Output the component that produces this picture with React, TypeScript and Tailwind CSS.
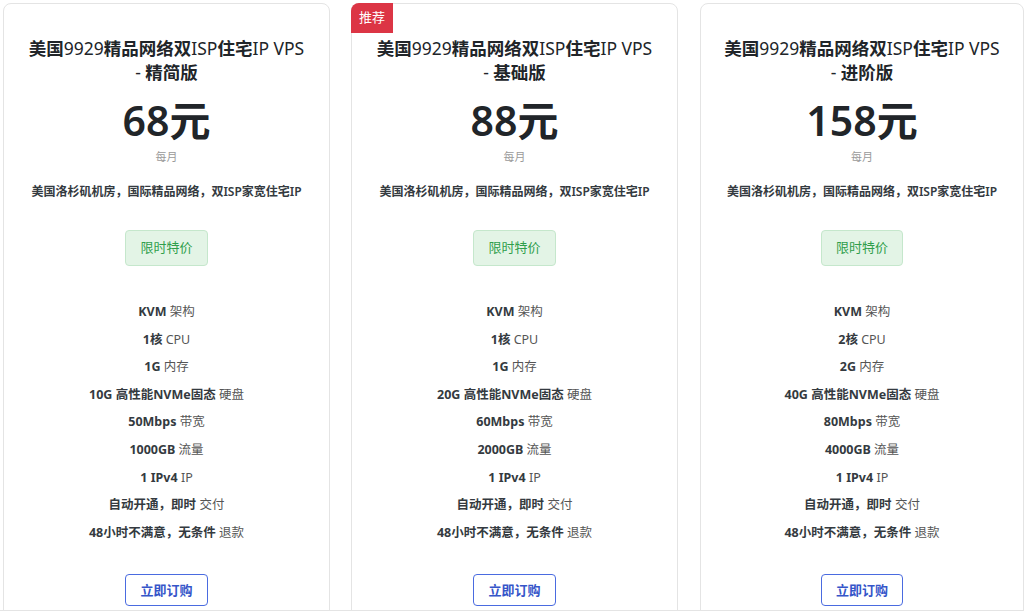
import React from "react";

type Plan = {
  edition: string;
  price: string;
  badge?: boolean;
  feats: [string, string][];
};

const plans: Plan[] = [
  {
    edition: "精简版",
    price: "68",
    feats: [
      ["KVM", "架构"],
      ["1核", "CPU"],
      ["1G", "内存"],
      ["10G 高性能NVMe固态", "硬盘"],
      ["50Mbps", "带宽"],
      ["1000GB", "流量"],
      ["1 IPv4", "IP"],
      ["自动开通，即时", "交付"],
      ["48小时不满意，无条件", "退款"],
    ],
  },
  {
    edition: "基础版",
    price: "88",
    badge: true,
    feats: [
      ["KVM", "架构"],
      ["1核", "CPU"],
      ["1G", "内存"],
      ["20G 高性能NVMe固态", "硬盘"],
      ["60Mbps", "带宽"],
      ["2000GB", "流量"],
      ["1 IPv4", "IP"],
      ["自动开通，即时", "交付"],
      ["48小时不满意，无条件", "退款"],
    ],
  },
  {
    edition: "进阶版",
    price: "158",
    feats: [
      ["KVM", "架构"],
      ["2核", "CPU"],
      ["2G", "内存"],
      ["40G 高性能NVMe固态", "硬盘"],
      ["80Mbps", "带宽"],
      ["4000GB", "流量"],
      ["1 IPv4", "IP"],
      ["自动开通，即时", "交付"],
      ["48小时不满意，无条件", "退款"],
    ],
  },
];

function Card({ plan, className }: { plan: Plan; className: string }) {
  return (
    <div
      className={`relative shrink-0 h-[640px] rounded-[8px] border border-[#e4e4e4] bg-white flex flex-col items-center pt-[32px] ${className}`}
    >
      {plan.badge && (
        <div className="absolute left-[-1px] top-[-1px] w-[42px] h-[30px] rounded-tl-[8px] bg-[#dc3545] text-white text-[13px] flex items-center justify-center">
          推荐
        </div>
      )}
      <div className="text-[17.5px] leading-[24px] text-[#212529] text-center font-bold px-4">
        美国<span className="font-normal">9929</span>精品网络双
        <span className="font-normal">ISP</span>住宅
        <span className="font-normal">IP VPS</span>
        <br />
        <span className="font-normal">-</span> {plan.edition}
      </div>
      <div className="mt-[12px] text-[41px] leading-[48px] font-semibold text-[#212529]">
        {plan.price}元
      </div>
      <div className="mt-[5px] text-[11px] leading-[16px] text-[#9a9a9a]">每月</div>
      <div className="mt-[18px] text-[12px] leading-[18px] font-semibold text-[#343a40]">
        美国洛杉矶机房，国际精品网络，双ISP家宽住宅IP
      </div>
      <div className="mt-[29px] h-[36px] px-[14px] flex items-center rounded-[4px] border border-[#c5e7cc] bg-[#e3f4e6] text-[13px] text-[#2f9e4b]">
        限时特价
      </div>
      <div className="mt-[32px] flex flex-col items-center">
        {plan.feats.map(([b, n], i) => (
          <div key={i} className="text-[12.5px] leading-[27.6px] text-[#343a40]">
            <span className="font-bold">{b}</span>{" "}
            <span className="text-[#555]">{n}</span>
          </div>
        ))}
      </div>
      <div className="mt-[28px] h-[32px] px-[14px] flex items-center rounded-[4px] border border-[#4a6be0] text-[13px] font-semibold text-[#3555c9]">
        立即订购
      </div>
    </div>
  );
}

export default function App() {
  return (
    <div
      className="w-[1024px] h-[611px] overflow-hidden bg-white border-b border-[#e4e4e4]"
      style={{ fontFamily: '"Noto Sans", "Noto Sans CJK SC", sans-serif' }}
    >
      <div className="flex pl-[3px] pt-[3px] gap-[21px]">
        <Card plan={plans[0]} className="w-[327px]" />
        <Card plan={plans[1]} className="w-[327px]" />
        <Card plan={plans[2]} className="w-[324px] ml-[1px]" />
      </div>
    </div>
  );
}
